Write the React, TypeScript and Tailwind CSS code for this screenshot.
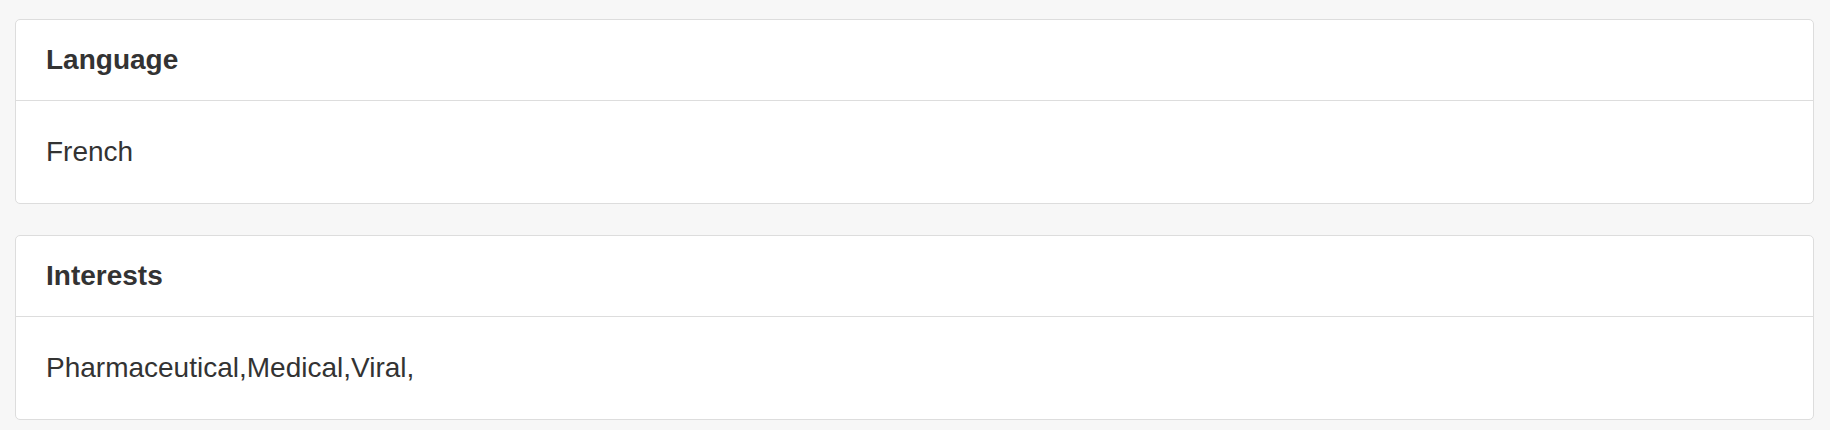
// Profile detail panels — Language and Interests, Bootstrap-style bordered cards.

const PANELS = [
  { title: 'Language', body: 'French' },
  { title: 'Interests', body: 'Pharmaceutical,Medical,Viral,' },
];

export default function App() {
  return (
    <div className="min-h-screen bg-[#f7f7f7] pl-[15px] pr-[16px] pt-[19px] font-['Liberation_Sans',Arial,sans-serif] text-[#333]">
      <div className="flex flex-col gap-[31px]">
        {PANELS.map((p) => (
          <Panel key={p.title} title={p.title}>
            {p.body}
          </Panel>
        ))}
      </div>
    </div>
  );
}

function Panel({ title, children }: { title: string; children: React.ReactNode }) {
  return (
    <div className="rounded-[5px] border border-[#ddd] bg-white">
      <div className="border-b border-[#ddd] px-[30px] py-[20px] text-[28px] leading-[40px] font-bold">
        {title}
      </div>
      <div className="px-[30px] py-[31px] text-[28px] leading-[40px]">{children}</div>
    </div>
  );
}
